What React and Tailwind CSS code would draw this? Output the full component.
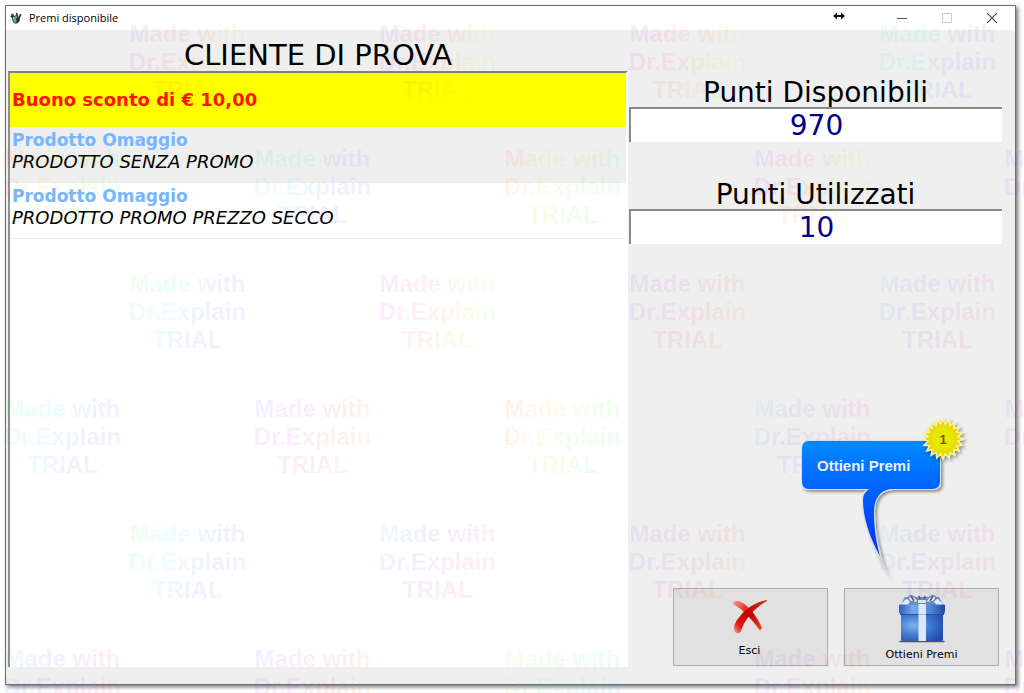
import { useState } from "react"

const PREMI = [
  { id: 1, titolo: "Buono sconto di € 10,00" },
  { id: 2, titolo: "Prodotto Omaggio", descrizione: "PRODOTTO SENZA PROMO" },
  { id: 3, titolo: "Prodotto Omaggio", descrizione: "PRODOTTO PROMO PREZZO SECCO" },
]

const TINTS = {
  green: "bg-[linear-gradient(115deg,#00ff00,#00f0ff,#4444ff,#ff00ff)]",
  cyan: "bg-[linear-gradient(115deg,#00e0ff,#4444ff,#ff00cc,#ff6600)]",
  blue: "bg-[linear-gradient(115deg,#4444ff,#dd00ff,#ff3300,#ffdd00)]",
  violet: "bg-[linear-gradient(115deg,#6633ff,#ff00cc,#ff6600,#ccff00,#00ff44)]",
  red: "bg-[linear-gradient(115deg,#ff2222,#ffcc00,#33ff00,#00ccff)]",
  yellow: "bg-[linear-gradient(115deg,#ffee00,#33ff33,#00f0ff,#4444ff)]",
}

const WATERMARK_ROWS = [
  ["violet", "violet", "violet", "green"],
  ["red", "green", "red", "violet", "blue"],
  ["green", "violet", "blue", "cyan"],
  ["green", "blue", "red", "cyan", "violet"],
  ["green", "cyan", "blue", "cyan"],
  ["cyan", "blue", "yellow", "blue", "violet"],
]

// 20 pointed star for the callout badge
const STAR = Array.from({ length: 40 }, (_, i) => {
  const r = i % 2 ? 15 : 20
  const a = (i * Math.PI) / 20 - Math.PI / 2
  return `${(148 + r * Math.cos(a)).toFixed(1)},${(25 + r * Math.sin(a)).toFixed(1)}`
}).join(" ")

function Watermark() {
  return (
    <div aria-hidden="true" className="pointer-events-none absolute inset-0 overflow-hidden opacity-[0.07]">
      {WATERMARK_ROWS.map((row, i) => (
        <div key={i} className={`flex h-[125px] gap-[125px] pt-5 ${i % 2 ? "" : "pl-[125px]"}`}>
          {row.map((tint, j) => (
            <div key={j} className="w-[125px] shrink-0">
              <p
                className={`mx-auto w-fit bg-clip-text text-center font-['Liberation_Sans',Arial,sans-serif] text-2xl/7 font-bold text-transparent ${TINTS[tint]}`}
              >
                Made with
                <br />
                Dr.Explain
                <br />
                TRIAL
              </p>
            </div>
          ))}
        </div>
      ))}
    </div>
  )
}

function AppIcon() {
  return (
    <svg viewBox="0 0 12 12" className="h-3 w-3">
      <path d="M1 1.5l2.2.5 1.3 2L6 2.500l1.500.3L8 5l2.500-3.500L11.500 3 10 6l-.5 3.500L7 11.500H4L2.500 9z" fill="#3d4246" />
      <path d="M4 4.500l2 1 .5 3.500-1.500 2L3 8.500z" fill="#5fb0ae" />
      <path d="M.8 4l2 1.500M6.500 1l1 2.500M8.500 6.500L7.500 9.500" stroke="#111" strokeWidth="1.200" />
      <path d="M5.500 3.500l1 2M3.500 5L3 7" stroke="#dfe9ea" strokeWidth=".8" />
    </svg>
  )
}

function CrossIcon() {
  return (
    <svg viewBox="0 0 36 36" className="h-9 w-9">
      <defs>
        <linearGradient id="stroke1" x1="0" y1="0" x2="1" y2="1">
          <stop offset="0" stopColor="#f7a08e" />
          <stop offset=".3" stopColor="#e8402a" />
          <stop offset=".55" stopColor="#c90000" />
          <stop offset="1" stopColor="#ee4a22" />
        </linearGradient>
        <linearGradient id="stroke2" x1="1" y1="0" x2="0" y2="1">
          <stop offset="0" stopColor="#c8402c" />
          <stop offset=".5" stopColor="#c40000" />
          <stop offset=".8" stopColor="#e01818" />
          <stop offset="1" stopColor="#f7a095" />
        </linearGradient>
      </defs>
      <path d="M1 5C1 1.500 5 1 9 3c7 3 16 14 21 26l-2 2.500C22 23 11 10 1 5z" fill="url(#stroke1)" />
      <path d="M35 2C24 8 13 19 9 32c-1 3-6 3-6.500-.5C1 26 4 22 9 16 16 8 25 3 34.500 1z" fill="url(#stroke2)" />
    </svg>
  )
}

function GiftIcon() {
  return (
    <svg viewBox="0 0 48 50" className="h-[50px] w-12">
      <defs>
        <radialGradient id="box" cx=".3" cy=".4" r=".8">
          <stop offset="0" stopColor="#7fb0ea" />
          <stop offset=".5" stopColor="#3f78cf" />
          <stop offset="1" stopColor="#1f4ba8" />
        </radialGradient>
        <linearGradient id="lid" x1="0" y1="0" x2="1" y2="0">
          <stop offset="0" stopColor="#2c5cb8" />
          <stop offset=".3" stopColor="#78a8e6" />
          <stop offset=".7" stopColor="#5084d4" />
          <stop offset="1" stopColor="#1d479f" />
        </linearGradient>
      </defs>
      <path d="M2 48.500h44" stroke="#555" strokeWidth="1.500" strokeLinecap="round" />
      <path d="M7 4h34l5 9H2z" fill="#5b8fda" />
      <path d="M3 11l5-5 5 1-4 6H3zM45 11l-5-5-5 1 4 6h6z" fill="#e4ebf6" />
      <path d="M3 22h42v24.500q0 1.500-2 1.500H5q-2 0-2-1.500z" fill="url(#box)" />
      <path d="M2 11.500h44q1 0 1 1.500v4q0 4-2 5H3q-2-1-2-5v-4q0-1.500 1-1.500z" fill="url(#lid)" />
      <path d="M2 21.500h44" stroke="#234f9f" strokeWidth="1" />
      <path d="M20.500 11h7.500v37h-7.500z" fill="#dde6f5" />
      <path d="M20.500 21.500h7.500" stroke="#9fb4d6" />
      <g fill="#dfe6f1" stroke="#72829f" strokeWidth="1.200">
        <path d="M20 8C16 2 11 1 10.500 4.500s3 5 9.500 5z" />
        <path d="M28 8c4-6 9-7 9.500-3.500s-3 5-9.500 5z" />
        <path d="M19.500 6.500h9v4h-9z" />
      </g>
      <path d="M13 3l3 5M35 3l-3 5M21 3l1 3M27 3l-1 3" stroke="#46597d" strokeWidth="1.500" />
    </svg>
  )
}

function Callout() {
  return (
    <svg
      viewBox="0 0 180 170"
      className="pointer-events-none absolute bottom-full -left-[49px] mb-1 h-[170px] w-[180px] overflow-visible"
    >
      <defs>
        <linearGradient id="bubble" gradientUnits="userSpaceOnUse" x1="0" y1="26" x2="0" y2="142">
          <stop offset="0" stopColor="#008cff" />
          <stop offset=".45" stopColor="#0060ff" />
          <stop offset="1" stopColor="#0030ff" />
        </linearGradient>
        <linearGradient id="tailEdge" gradientUnits="userSpaceOnUse" x1="0" y1="26" x2="0" y2="168">
          <stop offset="0" stopColor="#d9e6f2" />
          <stop offset=".8" stopColor="#d8d8dc" />
          <stop offset="1" stopColor="#dddddd" stopOpacity=".3" />
        </linearGradient>
        <radialGradient id="badge">
          <stop offset="0" stopColor="#dcf200" />
          <stop offset=".5" stopColor="#e6e600" />
          <stop offset="1" stopColor="#f2c200" />
        </radialGradient>
        <filter id="shadow" x="-20%" y="-20%" width="150%" height="150%">
          <feDropShadow dx="2" dy="2" stdDeviation="1.500" floodColor="#000" floodOpacity=".4" />
        </filter>
      </defs>
      <g filter="url(#shadow)">
        <path
          d="M14 26h124q8 0 8 8v34q0 8-8 8h-41C86 77 80 84 80 98c0 22 6 48 16 69C83 146 67 112 67 86q0-6 4-10H14q-8 0-8-8V34q0-8 8-8z"
          fill="url(#tailEdge)"
        />
      </g>
      <path
        d="M14 27h123q8 0 8 8v32q0 8-8 8h-42C84 77 79 86 79 98c0 16 2 30 6 44C75 124 68 104 68 86q0-7 6-11H14q-7 0-7-8V35q0-8 7-8z"
        fill="url(#bubble)"
      />
      <text x="22" y="57" fill="#e8f2ff" className="font-['Liberation_Sans',Arial,sans-serif] text-[15px] font-bold">
        Ottieni Premi
      </text>
      <g filter="url(#shadow)">
        <polygon points={STAR} fill="url(#badge)" stroke="#f6f6a0" strokeWidth="1.500" />
      </g>
      <text
        x="148"
        y="30"
        textAnchor="middle"
        fill="#8a4a00"
        className="font-['Liberation_Sans',Arial,sans-serif] text-[13px] font-bold"
      >
        1
      </text>
    </svg>
  )
}

function TitleBar() {
  return (
    <header className="flex h-6 items-center bg-white pr-px pl-1">
      <AppIcon />
      <h1 className="ml-[7px] flex-1 font-['Open_Sans','Noto_Sans',sans-serif] text-[11px] text-black">
        Premi disponibile
      </h1>
      <svg viewBox="0 0 12 8" className="mr-[34px] mb-1 h-2 w-3" fill="#111">
        <path d="M0 4l4-3.500V3h4V.5L12 4 8 7.500V5H4v2.500z" />
      </svg>
      <button type="button" aria-label="Riduci" className="flex h-6 w-[45px] items-center justify-center">
        <svg viewBox="0 0 10 10" className="h-2.5 w-2.5" stroke="#555">
          <path d="M0 5.500h10" />
        </svg>
      </button>
      <button type="button" aria-label="Ingrandisci" disabled className="flex h-6 w-[45px] items-center justify-center">
        <svg viewBox="0 0 10 10" className="h-2.5 w-2.5" fill="none" stroke="#ccc">
          <path d="M.5.5h9v9h-9z" />
        </svg>
      </button>
      <button type="button" aria-label="Chiudi" className="flex h-6 w-[45px] items-center justify-center">
        <svg viewBox="0 0 10 10" className="h-2.5 w-2.5" stroke="#444" strokeWidth="1.100">
          <path d="M0 0l10 10M10 0L0 10" />
        </svg>
      </button>
    </header>
  )
}

function Punti({ id, label, value }) {
  return (
    <div className="flex flex-col">
      <label htmlFor={id} className="text-center text-[28px]/8 text-black">
        {label}
      </label>
      <input
        id={id}
        readOnly
        value={value}
        className="-mt-0.5 h-[35px] w-full border-t-2 border-l-2 border-[#8a8a8a] bg-white text-center text-[28px]/8 text-[#00008b] outline-none"
      />
    </div>
  )
}

export default function App() {
  const [selected, setSelected] = useState(1)

  return (
    <div className="relative flex h-screen flex-col overflow-hidden bg-white pt-[5px] pr-2 pb-2 pl-[5px] font-['DejaVu_Sans',Verdana,sans-serif]">
      <div className="flex flex-1 flex-col border border-[#66727c] bg-[#efefef] shadow-[2px_2px_4px_rgba(0,0,0,0.55)]">
        <TitleBar />

        <main className="grid flex-1 grid-cols-[620fr_373fr] gap-px pr-[13px] pb-[17px] pl-0.5">
          {/* Elenco premi */}
          <section className="flex flex-col">
            <h2 className="pt-[9px] text-center text-[29px]/8 text-black">CLIENTE DI PROVA</h2>
            <ul className="flex-1 border-t-2 border-r-2 border-l-2 border-t-[#808080] border-r-white border-l-[#8f8f8f] bg-white">
              {PREMI.map((p, i) => (
                <li key={p.id}>
                  <button
                    type="button"
                    onClick={() => setSelected(p.id)}
                    className={`flex w-full flex-col px-0.5 text-left ${
                      selected === p.id ? "justify-center bg-[#ffff00]" : "justify-start pt-0.5"
                    } ${p.descrizione ? "h-14" : "h-[54px]"} ${
                      selected !== p.id && (i % 2 ? "bg-[#efefef]" : "border-b border-[#f0f0f0] bg-white")
                    }`}
                  >
                    {p.descrizione ? (
                      <>
                        <span className="text-[17px]/[22px] font-bold text-[#78b6ff]">{p.titolo}</span>
                        <span className="text-[18px]/[22px] text-black italic">{p.descrizione}</span>
                      </>
                    ) : (
                      <span className="text-[18px]/[22px] font-bold text-[#ff1400]">{p.titolo}</span>
                    )}
                  </button>
                </li>
              ))}
            </ul>
          </section>

          {/* Punti e comandi */}
          <section className="flex flex-col pt-[47px]">
            <div className="flex flex-col gap-[37px]">
              <Punti id="disponibili" label="Punti Disponibili" value="970" />
              <Punti id="utilizzati" label="Punti Utilizzati" value="10" />
            </div>

            <div className="mt-auto flex justify-end gap-4 pr-[3px] pb-px">
              <button
                type="button"
                className="flex h-[78px] w-[155px] flex-col items-center justify-center gap-2 border border-[#adadad] bg-[#e1e1e1] pt-1 pr-0.5 text-[11px]/4 text-black"
              >
                <CrossIcon />
                Esci
              </button>
              <div className="relative">
                <Callout />
                <button
                  type="button"
                  className="flex h-[78px] w-[155px] flex-col items-center justify-center gap-1 border border-[#adadad] bg-[#e1e1e1] pt-0.5 text-[11px]/4 text-black"
                >
                  <GiftIcon />
                  Ottieni Premi
                </button>
              </div>
            </div>
          </section>
        </main>
      </div>
      <Watermark />
    </div>
  )
}
